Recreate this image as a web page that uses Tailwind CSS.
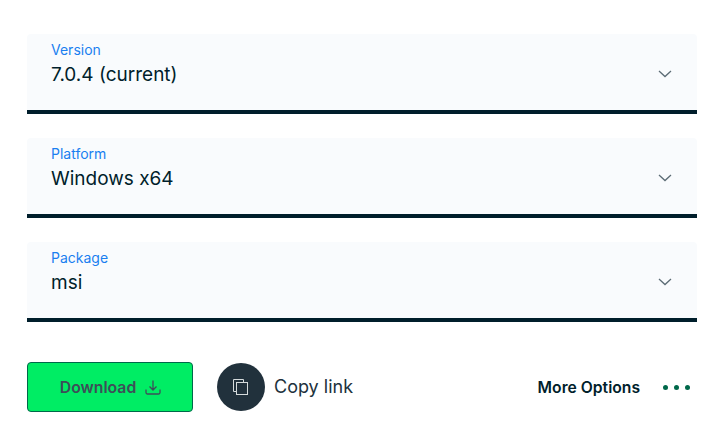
<!DOCTYPE html>
<html>
<head>
<meta charset="utf-8">
<script src="https://cdn.jsdelivr.net/npm/@tailwindcss/browser@4"></script>
</head>
<body class="bg-white">
<div class="w-[716px] h-[440px] overflow-hidden pt-[34px] pl-[27px] pr-[19px] font-['Inter',sans-serif] flex flex-col">
  <div class="flex flex-col gap-6">
    <div class="h-20 bg-[#f9fbfd] border-b-4 border-[#001e2b] rounded-t-[4px] pl-6 pr-[25px] flex items-start justify-between">
      <div class="pt-[8px]">
        <div class="text-[14px] leading-4 text-[#1a7ff0]">Version</div>
        <div class="mt-[5px] text-[19px] leading-6 text-[#001e2b]">7.0.4 (current)</div>
      </div>
      <svg class="mt-[36px]" width="14" height="8" viewBox="0 0 14 8" fill="none" stroke="#5c6c75" stroke-width="1.3"><path d="M1 1l6 5.5L13 1"/></svg>
    </div>
    <div class="h-20 bg-[#f9fbfd] border-b-4 border-[#001e2b] rounded-t-[4px] pl-6 pr-[25px] flex items-start justify-between">
      <div class="pt-[8px]">
        <div class="text-[14px] leading-4 text-[#1a7ff0]">Platform</div>
        <div class="mt-[5px] text-[19px] leading-6 text-[#001e2b]">Windows x64</div>
      </div>
      <svg class="mt-[36px]" width="14" height="8" viewBox="0 0 14 8" fill="none" stroke="#5c6c75" stroke-width="1.3"><path d="M1 1l6 5.5L13 1"/></svg>
    </div>
    <div class="h-20 bg-[#f9fbfd] border-b-4 border-[#001e2b] rounded-t-[4px] pl-6 pr-[25px] flex items-start justify-between">
      <div class="pt-[8px]">
        <div class="text-[14px] leading-4 text-[#1a7ff0]">Package</div>
        <div class="mt-[5px] text-[19px] leading-6 text-[#001e2b]">msi</div>
      </div>
      <svg class="mt-[36px]" width="14" height="8" viewBox="0 0 14 8" fill="none" stroke="#5c6c75" stroke-width="1.3"><path d="M1 1l6 5.5L13 1"/></svg>
    </div>
  </div>
  <div class="mt-10 flex items-center h-[50px]">
    <div class="w-[166px] h-[50px] bg-[#00ed64] border border-[#00684a] rounded-[4px] flex items-center justify-center gap-[9px] pl-[1px]">
      <span class="mt-[2px] text-[15.8px] font-semibold text-[#3d4f58]">Download</span>
      <svg width="16" height="15" viewBox="0 0 16 15" fill="none" stroke="#3d4f58" stroke-width="1.3"><path d="M8 .5v9.5M4.5 6.5L8 10l3.500-3.500M1 9.500v3a1.500 1.500 0 0 0 1.500 1.500h11a1.500 1.500 0 0 0 1.500-1.500v-3"/></svg>
    </div>
    <div class="ml-6 w-12 h-12 rounded-full bg-[#21313c] flex items-center justify-center">
      <svg width="16" height="16" viewBox="0 0 16 16" fill="none" stroke="#d5dbdc" stroke-width="1"><path d="M3.500 12.500H.5V.5h10V3"/><rect x="3.500" y="3.500" width="11" height="12"/></svg>
    </div>
    <span class="ml-[9px] mb-[2px] text-[18px] text-[#21313c]">Copy link</span>
    <span class="ml-auto mt-[2px] text-[15.700px] font-semibold text-[#001e2b]">More Options</span>
    <div class="ml-[23px] mr-[7px] flex gap-[6px]">
      <span class="w-[5px] h-[5px] rounded-full bg-[#00684a]"></span>
      <span class="w-[5px] h-[5px] rounded-full bg-[#00684a]"></span>
      <span class="w-[5px] h-[5px] rounded-full bg-[#00684a]"></span>
    </div>
  </div>
</div>
</body>
</html>
